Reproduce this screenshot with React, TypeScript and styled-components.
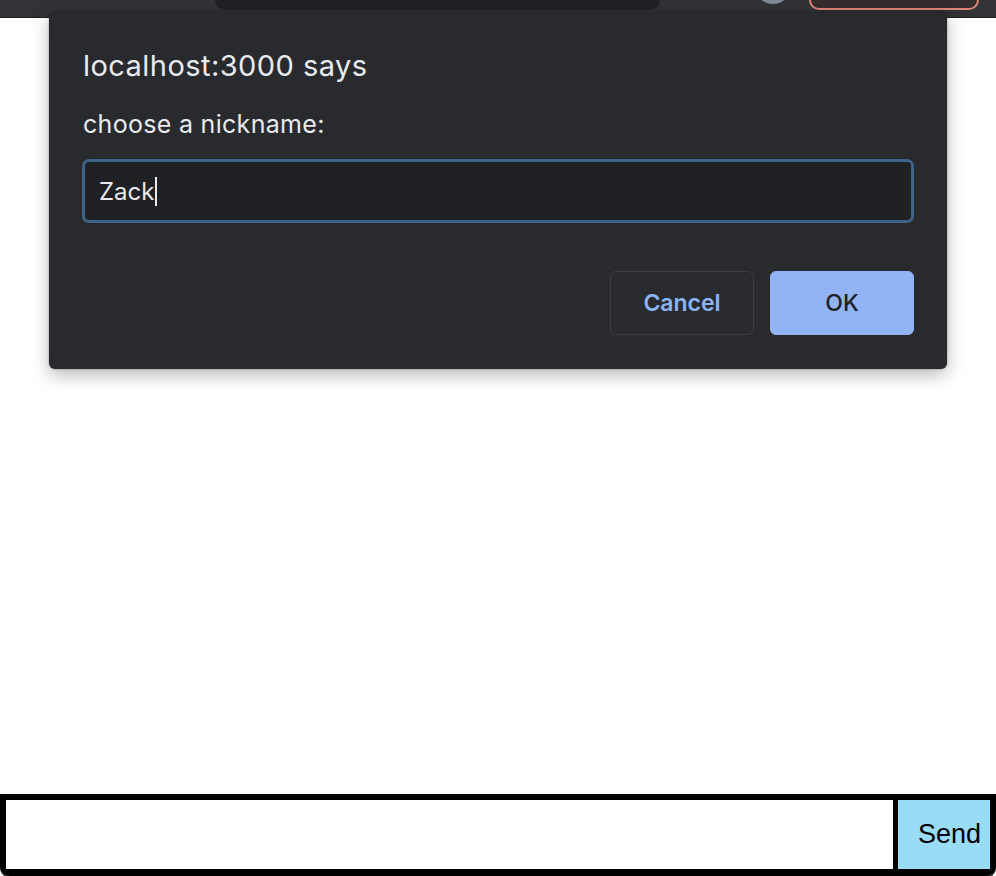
import React, { useState } from 'react'
import styled, { createGlobalStyle } from 'styled-components'

const GlobalStyle = createGlobalStyle`
  html, body {
    margin: 0;
    padding: 0;
    background: #ffffff;
  }

  * {
    box-sizing: border-box;
  }
`

const Page = styled.div`
  position: relative;
  display: flex;
  flex-direction: column;
  width: 996px;
  height: 876px;
  overflow: hidden;
  background: #ffffff;
`

const Toolbar = styled.div`
  position: relative;
  display: flex;
  align-items: flex-start;
  height: 18px;
  padding-left: 215px;
  background: #323336;
  border-bottom: 1px solid #1e1f22;
`

const Omnibox = styled.div`
  width: 445px;
  height: 10px;
  background: #202124;
  border-radius: 0 0 12px 12px;
`

const Avatar = styled.div`
  width: 36px;
  height: 36px;
  margin: -32px 0 0 95px;
  border-radius: 50%;
  background: #7d8c9a;
`

const ProfilePill = styled.div`
  width: 170px;
  height: 10px;
  margin-left: 18px;
  border: 2px solid #e0857a;
  border-top: none;
  border-radius: 0 0 14px 14px;
  background: #352c2d;
`

const Content = styled.main`
  flex: 1;
  background: #ffffff;
`

const Dialog = styled.div`
  position: absolute;
  top: 11px;
  left: 49px;
  width: 898px;
  height: 358px;
  padding: 0 33px 0 33px;
  background: #292a2d;
  border-radius: 6px;
  box-shadow: 0 6px 18px rgba(0, 0, 0, 0.28), 0 0 2px rgba(0, 0, 0, 0.4);
  font-family: Inter, 'Noto Sans', sans-serif;
  color: #e8eaed;
`

const Title = styled.h1`
  margin: 0;
  padding: 37px 0 0 1px;
  font-size: 29px;
  font-weight: 400;
  letter-spacing: 0.45px;
  line-height: 36px;
`

const Message = styled.p`
  margin: 0;
  padding: 24px 0 0 1px;
  font-size: 25px;
  font-weight: 400;
  letter-spacing: 0.3px;
  line-height: 32px;
`

const PromptInput = styled.div`
  display: flex;
  align-items: center;
  height: 64px;
  margin-top: 19px;
  padding: 0 14px;
  background: #202124;
  border: 3px solid #3f6489;
  border-radius: 7px;
  font-size: 24px;
  color: #e8eaed;
`

const Caret = styled.span`
  display: inline-block;
  width: 2px;
  height: 29px;
  margin-left: 1px;
  background: #e8eaed;
`

const Actions = styled.div`
  display: flex;
  justify-content: flex-end;
  gap: 16px;
  margin-top: 48px;
`

const DialogButton = styled.button<{ $primary?: boolean }>`
  width: 144px;
  height: 64px;
  border-radius: 6px;
  border: 1px solid ${(p) => (p.$primary ? '#92b4f4' : '#3c3d41')};
  background: ${(p) => (p.$primary ? '#92b4f4' : 'transparent')};
  color: ${(p) => (p.$primary ? '#202124' : '#8ab4f8')};
  font-family: Inter, 'Noto Sans', sans-serif;
  font-size: 23px;
  font-weight: ${(p) => (p.$primary ? 500 : 600)};
  cursor: pointer;
`

const Composer = styled.form`
  display: flex;
  height: 82px;
  border: 6px solid #000000;
  border-bottom-width: 7px;
  border-radius: 0 0 10px 10px;
  background: #000000;
  box-shadow: 0 2px 0 #3a3a3c;
`

const MessageInput = styled.input`
  flex: 1;
  height: 100%;
  border: none;
  margin-right: 5px;
  outline: none;
  background: #ffffff;
  font-family: 'Liberation Sans', Arial, sans-serif;
  font-size: 24px;
`

const SendButton = styled.button`
  width: 92px;
  height: 100%;
  border: none;
  padding: 0 0 0 20px;
  background: #98dcf8;
  color: #000000;
  font-family: 'Liberation Sans', Arial, sans-serif;
  font-size: 27px;
  text-align: left;
`

const App: React.FC = () => {
  const [text, setText] = useState('')

  return (
    <>
      <GlobalStyle />
      <Page>
        <Toolbar>
          <Omnibox />
          <Avatar />
          <ProfilePill />
        </Toolbar>

        <Content />

        <Composer onSubmit={(e) => e.preventDefault()}>
          <MessageInput value={text} onChange={(e) => setText(e.target.value)} />
          <SendButton type='submit'>Send</SendButton>
        </Composer>

        <Dialog role='dialog'>
          <Title>localhost:3000 says</Title>
          <Message>choose a nickname:</Message>
          <PromptInput>
            Zack
            <Caret />
          </PromptInput>
          <Actions>
            <DialogButton type='button'>Cancel</DialogButton>
            <DialogButton type='button' $primary>
              OK
            </DialogButton>
          </Actions>
        </Dialog>
      </Page>
    </>
  )
}

export default App
